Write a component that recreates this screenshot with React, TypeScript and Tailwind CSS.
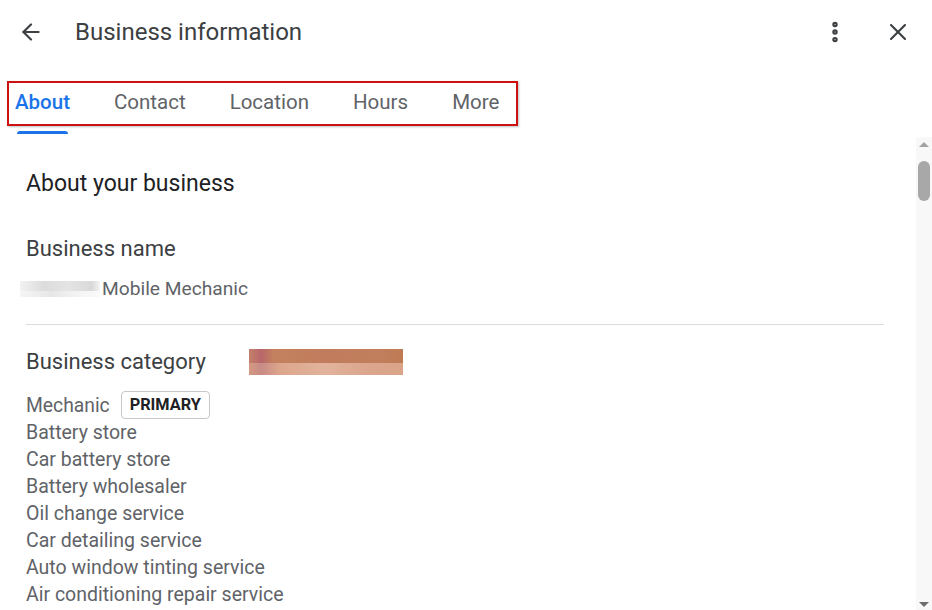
import { ArrowLeft, EllipsisVertical, X } from "lucide-react";

const TABS = ["About", "Contact", "Location", "Hours", "More"];

const CATEGORIES = [
  "Battery store",
  "Car battery store",
  "Battery wholesaler",
  "Oil change service",
  "Car detailing service",
  "Auto window tinting service",
  "Air conditioning repair service",
];

export default function App() {
  return (
    <div
      className="h-[610px] w-[932px] overflow-hidden bg-white"
      style={{ fontFamily: "Roboto, 'Liberation Sans', sans-serif" }}
    >
      {/* Header */}
      <div className="flex h-[64px] items-center pl-[18px] pr-[20px]">
        <ArrowLeft className="h-[26px] w-[26px] text-[#3c4043]" strokeWidth={2} />
        <div className="ml-[31px] text-[24px] text-[#3c4043]">Business information</div>
        <div className="flex-1" />
        <EllipsisVertical className="mr-[-3px] h-[26px] w-[26px] text-[#3c4043]" strokeWidth={3} />
        <X className="ml-[39px] h-[28px] w-[28px] text-[#3c4043]" strokeWidth={1.8} />
      </div>

      {/* Tabs */}
      <div className="mt-[17px] pl-[7px]">
        <div className="flex h-[45px] w-[511px] items-center border-2 border-[#cc1111] pb-[3px] pl-[6px] text-[20.5px] shadow-[1px_1px_2px_rgba(0,0,0,0.25)]">
          {TABS.map((t, i) => (
            <span
              key={t}
              className={`${i === 0 ? "font-medium text-[#1a73e8]" : "text-[#5f6368]"} mr-[44px]`}
            >
              {t}
            </span>
          ))}
        </div>
        <div className="ml-[10px] mt-[5px] h-[3px] w-[51px] rounded-t-[3px] bg-[#1a73e8]" />
      </div>

      {/* Body */}
      <div className="mt-[3px] flex h-[473px]">
        <div className="flex-1 pl-[26px] pr-[32px]">
          <div className="mt-[33px] text-[23px] leading-[28px] text-[#202124]">About your business</div>

          <div className="mt-[37px] text-[22px] leading-[28px] text-[#3c4043]">Business name</div>
          <div className="mt-[15px] flex items-center text-[19.2px] leading-[22px] text-[#5f6368]">
            <div className="-ml-[6px] mr-[2px] flex h-[16px] w-[80px] flex-col">
              <div className="h-[10px] bg-[linear-gradient(90deg,#f2f2f2,#dcdcdc_30%,#e4e4e4_60%,#d9d9d9_90%,#f5f5f5)]" />
              <div className="h-[6px] bg-[linear-gradient(90deg,#f6f6f6,#e6e6e6_40%,#f3f3f3_70%,#fafafa)]" />
            </div>
            Mobile Mechanic
          </div>

          <div className="mt-[24px] h-px bg-[#dadce0]" />

          <div className="mt-[23px] flex items-center">
            <div className="text-[22px] leading-[28px] text-[#3c4043]">Business category</div>
            <div className="ml-[43px] flex h-[26px] w-[154px] flex-col">
              <div className="h-[14px] bg-[linear-gradient(90deg,#c3826a,#b8666b_8%,#c4815f_16%,#c07c5c_50%,#c27f5e_85%,#bd7a52)]" />
              <div className="h-[12px] bg-[linear-gradient(90deg,#d49a80,#c98b86_8%,#dca68c_20%,#e2b39c_50%,#dba68d_75%,#d9a488)]" />
            </div>
          </div>

          <div className="mt-[15px] flex items-center text-[19.3px] text-[#5f6368]">
            <span className="leading-[27px]">Mechanic</span>
            <span className="ml-[11px] rounded-[4px] border border-[#c4c7c5] px-[8px] text-[16.3px] font-bold leading-[26px] text-[#202124]">
              PRIMARY
            </span>
          </div>
          {CATEGORIES.map((c) => (
            <div key={c} className="text-[19.5px] leading-[27px] text-[#5f6368]">
              {c}
            </div>
          ))}
        </div>

        {/* Scrollbar */}
        <div className="flex w-[16px] flex-col items-center bg-[#f8f8f8]">
          <div className="mt-[5px] h-0 w-0 border-x-[5px] border-b-[5px] border-x-transparent border-b-[#a3a3a3]" />
          <div className="mt-[14px] h-[40px] w-[12px] rounded-[6px] bg-[#a8a8a8]" />
          <div className="flex-1" />
          <div className="mb-[3px] h-0 w-0 border-x-[5px] border-t-[5px] border-x-transparent border-t-[#6e6e6e]" />
        </div>
      </div>
    </div>
  );
}
